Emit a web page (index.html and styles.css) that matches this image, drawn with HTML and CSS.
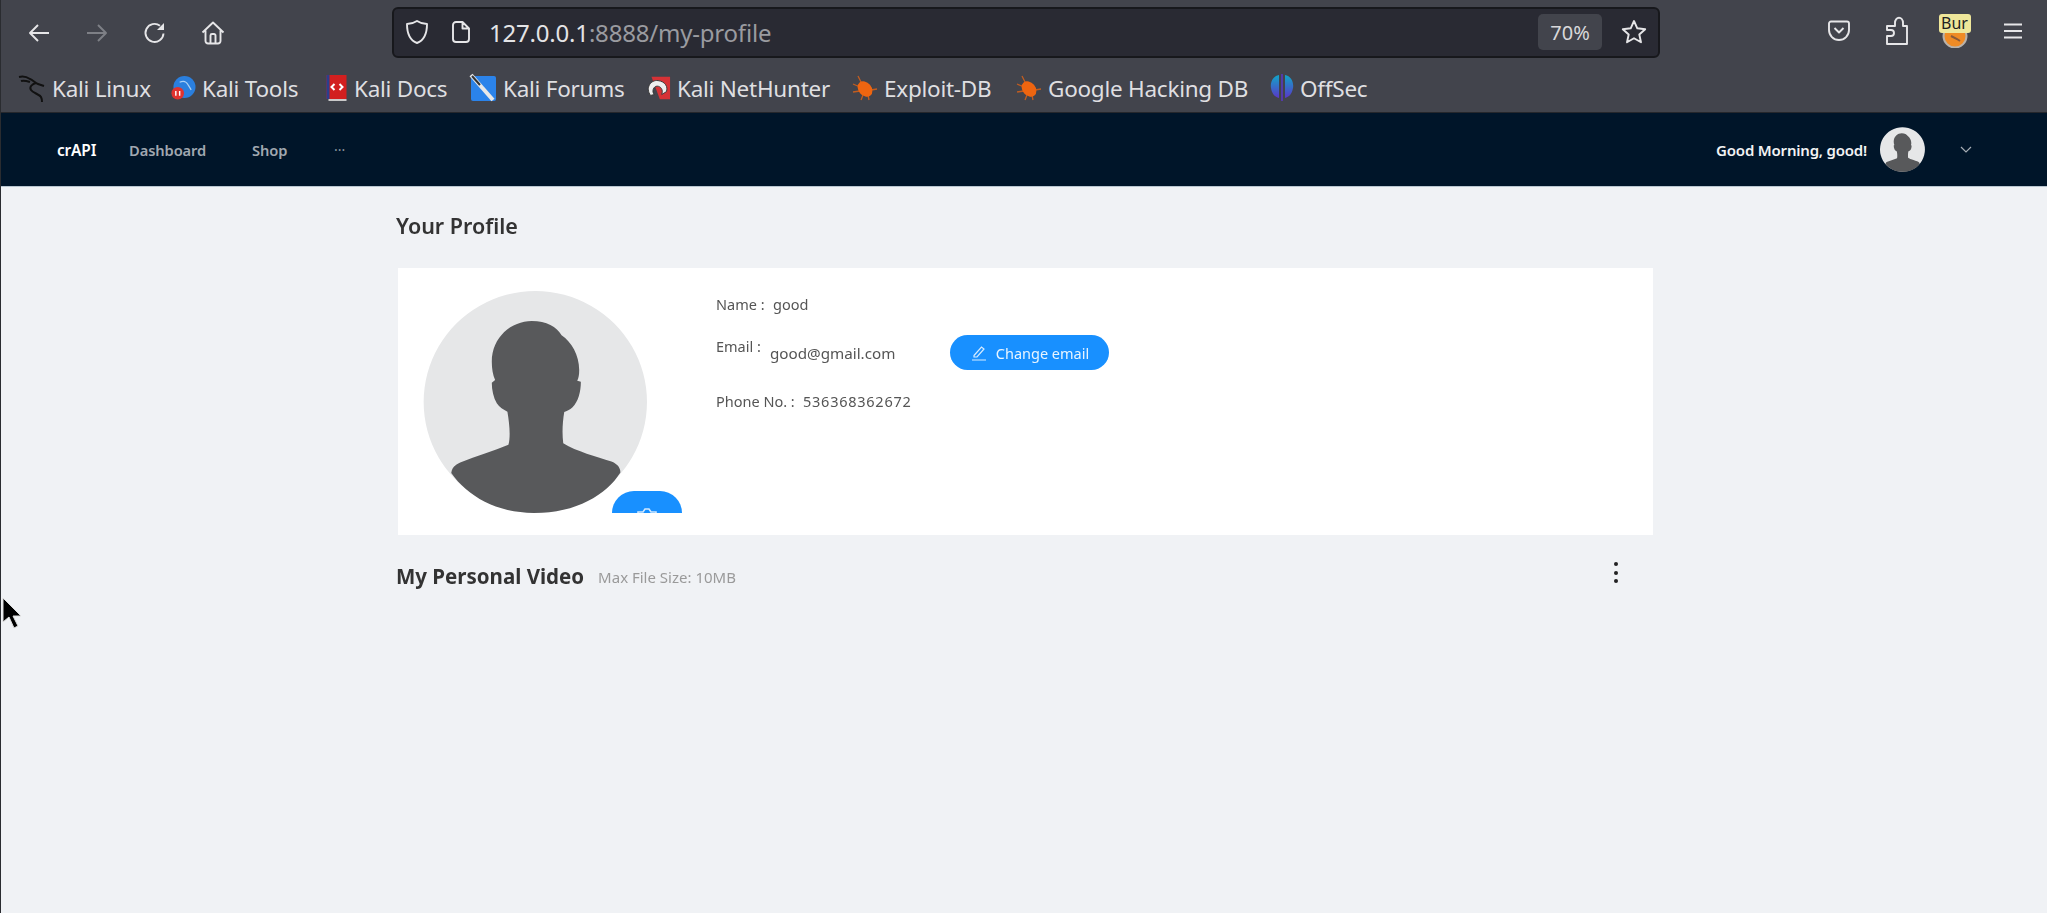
FILE: index.html
```html
<!DOCTYPE html>
<html lang="en">
<head>
<meta charset="utf-8">
<title>crAPI</title>
<link rel="stylesheet" href="styles.css">
</head>
<body>
<svg class="defs" width="0" height="0" aria-hidden="true">
  <symbol id="person" viewBox="130 272 673 668">
    <path fill="#e6e7e8" d="M466 272a336 334 0 1 1-.1 0z"/>
    <path fill="#58595b" d="M455 362C500 362 530 380 545 405C575 425 598 465 598 510C598 525 596 535 592 542L603 545C603 575 595 605 578 622C570 630 560 634 553 636C548 665 546 700 550 730C590 755 650 770 695 785C712 792 722 803 722 818C680 885 590 940 462 940C350 940 262 890 213 820C215 803 225 795 240 788C290 768 340 755 385 735C392 710 388 670 382 635C370 630 358 622 350 610C340 592 335 570 335 548L345 540C338 525 335 505 335 485C335 410 395 362 455 362Z"/>
  </symbol>
  <symbol id="bug" viewBox="0 0 26 26">
    <ellipse cx="13" cy="14" rx="6.500" ry="8.500" transform="rotate(-40 13 14)" fill="#ee6510"/>
    <path d="M6 1l4 8M1 9l7 3M1 17l7-1M9 25l2-5M17 25l-1-5M25 14l-6 1" stroke="#ee6510" stroke-width="1.300" fill="none" opacity=".75"/>
  </symbol>
</svg>
<div class="app">
  <header class="browser">
    <div class="toolbar">
      <div class="nav-btns">
        <span class="tool"><svg width="24" height="24" viewBox="0 0 24 24" class="ico"><path d="M22 12H3M11 4l-8 8 8 8"/></svg></span>
        <span class="tool"><svg width="24" height="24" viewBox="0 0 24 24" class="ico dim"><path d="M2 12h19M13 4l8 8-8 8"/></svg></span>
        <span class="tool"><svg width="24" height="24" viewBox="0 0 24 24" class="ico"><path d="M20.500 12.500A9 9 0 1 1 17 4.800"/><path class="solid" d="M21 2v7h-7z"/></svg></span>
        <span class="tool"><svg width="26" height="26" viewBox="0 0 26 26" class="ico"><path d="M2.500 12.500L13 2.500l10.500 10M5.500 10.500V21a2.500 2.500 0 0 0 2.500 2.500h10a2.500 2.500 0 0 0 2.500-2.500V10.500M10.500 23.500V15.500a1.500 1.500 0 0 1 1.500-1.500h2a1.500 1.500 0 0 1 1.500 1.500v8"/></svg></span>
      </div>
      <div class="urlbar">
        <svg width="24" height="26" viewBox="0 0 24 26" class="ico shield"><path d="M12 2c3 2 6 3 10 3 0 9-2 16-10 19C4 21 2 14 2 5c4 0 7-1 10-3z"/></svg>
        <svg width="20" height="24" viewBox="0 0 20 24" class="ico page"><path d="M11.500 2H5a3 3 0 0 0-3 3v14a3 3 0 0 0 3 3h10a3 3 0 0 0 3-3V8.500zM11.500 2v6.500H18"/></svg>
        <span class="url"><span class="host">127.0.0.1</span>:8888/my-profile</span>
        <span class="zoom">70%</span>
        <svg width="28" height="28" viewBox="0 0 28 28" class="ico star"><path d="M14 3l3.300 7.300 7.900.9-5.900 5.300 1.700 7.800L14 20.300l-7 4 1.700-7.800L2.800 11.200l7.900-.9z"/></svg>
      </div>
      <div class="ext-btns">
        <span class="tool"><svg width="24" height="24" viewBox="0 0 24 24" class="ico"><path d="M4 2.500h16a2 2 0 0 1 2 2V11a10 10 0 0 1-20 0V4.500a2 2 0 0 1 2-2zM7.500 9l4.500 4.500L16.500 9"/></svg></span>
        <span class="tool"><svg width="24" height="30" viewBox="0 0 24 30" class="ico"><path d="M2 28V20h4a3 3 0 0 0 0-6H2v-4h8V7c0-7 8-7 8 0v3h4v18z"/></svg></span>
        <span class="tool burp">
          <svg width="26" height="20" viewBox="0 0 26 20"><circle cx="13" cy="8" r="11.500" fill="#ef8b25" stroke="#b9b2aa" stroke-width="2"/><path d="M9 8l6 3 3 2" stroke="#8a5a3a" stroke-width="2" fill="none"/></svg>
          <span class="burp-tip">Bur</span>
        </span>
        <span class="tool"><svg width="22" height="18" viewBox="0 0 22 18" class="ico"><path d="M2 2.500h18M2 9h18M2 15.500h18"/></svg></span>
      </div>
    </div>
    <nav class="bookmarks">
      <a class="bm">
        <svg width="28" height="28" viewBox="0 0 28 28" class="fav"><path d="M1 3c4-1 8 0 11 2 3 1 5 4 8 5l6 2M3 7c3-1 6 0 9 1M18 9c-4 1-7 4-5 7 2 3 8 4 10 7 1 2 1 3 1 5" stroke="#111" stroke-width="2" fill="none"/></svg>
        <span>Kali Linux</span>
      </a>
      <a class="bm">
        <svg width="25" height="26" viewBox="0 0 26 26" class="fav"><circle cx="14" cy="12" r="11.500" fill="#2a7fde"/><path d="M9 7c4-2 7-1 9 3l3 5" stroke="#a9d0f5" stroke-width="1.300" fill="none"/><circle cx="7" cy="18.500" r="6.500" fill="#e0332f"/><path d="M5 16v5M9 16v5" stroke="#fff" stroke-width="1.500"/></svg>
        <span>Kali Tools</span>
      </a>
      <a class="bm">
        <svg width="23" height="28" viewBox="0 0 22 28" class="fav"><rect x="1" y="1" width="20" height="24" fill="#d21f1f"/><rect x="1" y="1" width="3" height="24" fill="#2b3f8c"/><rect x="3" y="25" width="18" height="2" fill="#c9c9c9"/><path d="M9 10l-3 3 3 3M14 10l3 3-3 3" stroke="#fff" stroke-width="2" fill="none"/></svg>
        <span>Kali Docs</span>
      </a>
      <a class="bm">
        <svg width="28" height="30" viewBox="0 0 28 30" class="fav"><rect x="2" y="3" width="25" height="25" rx="2" fill="#2b83ea"/><path d="M2 2l22 25" stroke="#e8e8e8" stroke-width="4"/><path d="M3 3l8 9" stroke="#333" stroke-width="2"/></svg>
        <span>Kali Forums</span>
      </a>
      <a class="bm">
        <svg width="26" height="28" viewBox="0 0 28 28" class="fav"><path d="M7 2h20v24H16z" fill="#d63236"/><path d="M6 22C0 14 6 5 14 6s11 7 9 12l-5 3c2-5-1-9-5-9s-6 6-3 9z" fill="#eee" stroke="#333" stroke-width="1"/></svg>
        <span>Kali NetHunter</span>
      </a>
      <a class="bm">
        <svg width="26" height="26" class="fav"><use href="#bug"/></svg>
        <span>Exploit-DB</span>
      </a>
      <a class="bm">
        <svg width="26" height="26" class="fav"><use href="#bug"/></svg>
        <span>Google Hacking DB</span>
      </a>
      <a class="bm">
        <svg width="24" height="32" viewBox="0 0 24 32" class="fav"><defs><linearGradient id="off" x1="0" y1="0" x2="0" y2="1"><stop offset="0" stop-color="#10a6c8"/><stop offset="1" stop-color="#5a37c8"/></linearGradient></defs><path d="M9 3C3 4 0 10 1 16s4 9 8 10zM15 3c6 1 9 7 8 13s-4 9-8 10z" fill="url(#off)"/><path d="M12 2v27" stroke="#5a37c8" stroke-width="1.500"/></svg>
        <span>OffSec</span>
      </a>
    </nav>
  </header>

  <div class="topnav">
    <div class="topnav-left">
      <span class="brand">crAPI</span>
      <a class="nav-link dash">Dashboard</a>
      <a class="nav-link shop">Shop</a>
      <span class="nav-more">···</span>
    </div>
    <div class="topnav-right">
      <span class="greet">Good Morning, good!</span>
      <svg class="nav-avatar" width="45" height="45"><use href="#person"/></svg>
      <svg class="chev" width="12" height="8" viewBox="0 0 12 8"><path d="M1 1l5 5 5-5" stroke="#a6adb4" stroke-width="1.200" fill="none"/></svg>
    </div>
  </div>

  <main class="content">
    <h1 class="title">Your Profile</h1>
    <section class="card">
      <div class="pic">
        <svg width="225" height="222"><use href="#person"/></svg>
        <span class="cam"><svg width="24" height="22" viewBox="0 0 24 22"><path d="M3 7h5l2-3h4l2 3h5v13H3z M12 9a4 4 0 1 0 .1 0z" fill="none" stroke="#cfe7ff" stroke-width="1.600"/></svg></span>
      </div>
      <div class="info">
        <div class="row name-row"><span class="lbl">Name :</span><span class="val">good</span></div>
        <div class="row email-row">
          <span class="lbl email-lbl">Email :</span><span class="val email-val">good@gmail.com</span>
          <button class="pill"><svg width="18" height="18" viewBox="0 0 18 18"><path d="M4 11.500L11.500 3l2.500 2L7 13H4zM2 16h14" fill="none" stroke="#d6ebff" stroke-width="1.200"/></svg>Change email</button>
        </div>
        <div class="row phone-row"><span class="lbl">Phone No. :</span><span class="val phone-val">536368362672</span></div>
      </div>
    </section>
    <div class="video-head">
      <h2 class="subtitle">My Personal Video</h2>
      <span class="hint">Max File Size: 10MB</span>
      <span class="kebab"><i></i><i></i><i></i></span>
    </div>
  </main>
</div>
<svg class="cursor" width="22" height="34" viewBox="0 0 22 34"><path d="M2 1v24l6-5 5 11 4-2-5-10h8z" fill="#000" stroke="#ddd" stroke-width="1"/></svg>
</body>
</html>
```

FILE: styles.css
```css
* { box-sizing: border-box; }
html, body { margin: 0; height: 100%; }
body {
  background: #f0f2f5;
  font-family: "Noto Sans", "Open Sans", sans-serif;
  overflow: hidden;
  position: relative;
  border-left: 1px solid #2a2c30;
}
.defs { position: absolute; }
.app { filter: blur(0.45px); min-height: 913px; }

.browser { background: #42444c; height: 113px; border-bottom: 1px solid #25272c; }
.toolbar { display: flex; align-items: center; height: 64px; padding-left: 9px; }
.nav-btns { display: flex; width: 382px; margin-top: 1px; }
.tool { width: 58px; display: flex; justify-content: center; align-items: center; }
.ico { fill: none; stroke: #e6e6e8; stroke-width: 1.900; stroke-linejoin: round; }
.ico.dim { stroke: #7e8086; }
.ico .solid { fill: #e6e6e8; stroke: none; }

.urlbar {
  width: 1268px; height: 51px;
  display: flex; align-items: center;
  background: #292a33;
  border: 2px solid #17181c;
  border-radius: 6px;
  padding-left: 11px;
}
.page { margin-left: 22px; }
.url { margin-left: 18px; font-size: 24px; color: #9a9ba0; flex: 1; letter-spacing: -0.2px; }
.host { color: #e4e4e6; }
.zoom {
  width: 64px; height: 36px; border-radius: 5px; background: #42444c;
  color: #d8d8da; font-size: 20px; display: flex; align-items: center; justify-content: center;
}
.star { margin: 0 10px 0 18px; }

.ext-btns { display: flex; margin-left: 150px; margin-top: -2px; }
.burp { position: relative; height: 48px; padding-top: 14px; }
.burp-tip {
  position: absolute; left: 13px; top: 7px; width: 32px; height: 19px;
  background: #efe79a; color: #222; border-radius: 3px;
  font-size: 16px; line-height: 19px; padding-left: 2px;
}

.bookmarks {
  display: grid;
  grid-template-columns: 153px 154px 144px 176px 207px 164px 254px 100px;
  padding-left: 17px; height: 48px; align-items: center;
}
.bm { display: flex; align-items: center; color: #dfdfe1; font-size: 22.500px; gap: 6px; letter-spacing: -0.25px; white-space: nowrap; }

.topnav {
  height: 74px; background: #001529;
  display: flex; align-items: center; justify-content: space-between;
  padding: 0 75px 0 56px;
  border-bottom: 1px solid #b9c6d0;
}
.topnav-left, .topnav-right { display: flex; align-items: center; }
.brand { color: #fff; font-weight: 600; font-size: 15.500px; width: 72px; letter-spacing: -0.2px; }
.nav-link { color: #a0a8b0; font-weight: 600; font-size: 14.700px; letter-spacing: -0.1px; }
.dash { width: 123px; }
.shop { width: 81px; }
.nav-more { color: #8b949c; font-size: 14px; margin-left: 1px; }
.greet { color: #f2f3f4; font-weight: 600; font-size: 15px; margin-right: 13px; letter-spacing: -0.2px; }
.chev { margin-left: 35px; }

.content { padding-left: 395px; width: 1652px; }
.title { margin: 0; height: 81px; font-size: 21.500px; font-weight: 600; color: #333; line-height: 78px; }
.card { background: #fff; margin-left: 2px; height: 267px; display: flex; padding: 23px 0 0 25px; }
.pic { position: relative; width: 259px; height: 222px; overflow: hidden; flex: none; }
.cam {
  position: absolute; left: 189px; top: 200px; width: 70px; height: 44px;
  background: #1890ff; border-radius: 22px; display: flex; justify-content: center; padding-top: 14px;
}
.info { margin-left: 34px; color: #555; font-size: 14.500px; }
.row { display: flex; }
.lbl { color: #555; }
.name-row { height: 28px; margin-top: -1px; align-items: center; }
.name-row .lbl { width: 57px; }
.email-row { height: 35px; margin-top: 17px; align-items: center; }
.email-lbl { width: 54px; margin-top: -13px; }
.email-val { width: 180px; font-size: 15.200px; }
.pill {
  width: 159px; height: 35px; border: 0; border-radius: 18px; background: #1890ff; color: #e8f4ff;
  font: inherit; display: flex; align-items: center; justify-content: center; gap: 8px;
}
.phone-row { margin-top: 17px; height: 28px; align-items: center; }
.phone-row .lbl { width: 87px; }
.phone-val { letter-spacing: 0.75px; }

.video-head { display: flex; align-items: center; height: 82px; position: relative; }
.subtitle { margin: 0; font-size: 20.500px; font-weight: 700; color: #333; }
.hint { margin-left: 14px; font-size: 15px; color: #9a9a9a; margin-top: 2px; }
.kebab { position: absolute; left: 1218px; top: 27px; display: flex; flex-direction: column; gap: 4.500px; }
.kebab i { width: 4px; height: 4px; border-radius: 50%; background: #222; display: block; }
.cursor { position: absolute; left: 0; top: 597px; }
```
